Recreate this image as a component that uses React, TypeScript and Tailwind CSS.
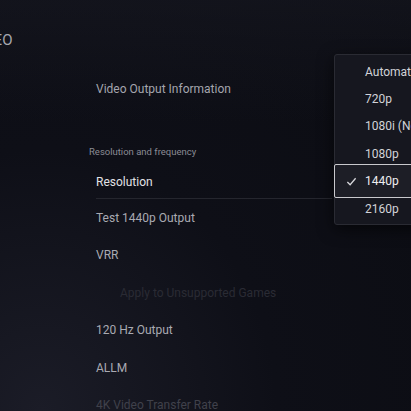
import React from 'react';

interface Row {
  label: string;
  tone: 'normal' | 'bright' | 'dim' | 'faint';
  indent?: boolean;
}

const rows: Row[] = [
  { label: 'Test 1440p Output', tone: 'normal' },
  { label: 'VRR', tone: 'normal' },
  { label: 'Apply to Unsupported Games', tone: 'faint', indent: true },
  { label: '120 Hz Output', tone: 'normal' },
  { label: 'ALLM', tone: 'normal' },
  { label: '4K Video Transfer Rate', tone: 'dim' },
];

const toneClass: Record<Row['tone'], string> = {
  normal: 'text-[#a9aab2]',
  bright: 'text-[#e4e4e8]',
  dim: 'text-[#40414b]',
  faint: 'text-[#2a2b34]',
};

const options = ['Automatic', '720p', '1080i (Not Recommended)', '1080p', '1440p', '2160p'];

const App: React.FC = () => {
  const selected = '1440p';

  return (
    <div
      className="relative w-[411px] h-[411px] overflow-hidden bg-[radial-gradient(ellipse_at_10%_100%,#1b1c27_0%,#0e0f17_45%,#0b0c12_100%)]"
      style={{ fontFamily: 'Roboto, "Noto Sans", sans-serif' }}
    >
      <div className="absolute inset-0 bg-[linear-gradient(180deg,rgba(30,31,42,0.35)_0%,rgba(0,0,0,0)_30%)]" aria-hidden />

      <div className="relative flex flex-col">
        {/* page title, cut at the left edge */}
        <div className="h-[80px] pt-[31px] w-[13px] flex justify-end">
          <span className="whitespace-nowrap text-[15px] leading-[18px] text-[#a6a7af] tracking-wide">VIDEO</span>
        </div>

        <div className="pl-[96px] text-[12px] text-[#a4a5ad] leading-[18px]">Video Output Information</div>

        <div className="pl-[89px] mt-[47px] text-[9.5px] text-[#8b8c95] leading-[14px]">Resolution and frequency</div>

        <div className="ml-[96px] w-[236px] mt-[6px] h-[34px] flex items-center border-b border-[#25262e]">
          <span className="text-[12px] text-[#e2e2e6]">Resolution</span>
        </div>

        <div className="flex flex-col">
          {rows.map((r) => (
            <div
              key={r.label}
              className={`h-[37.5px] flex items-center ${r.indent ? 'pl-[120px]' : 'pl-[96px]'} text-[12px] ${toneClass[r.tone]}`}
            >
              {r.label}
            </div>
          ))}
        </div>
      </div>

      {/* dropdown */}
      <div className="absolute left-[334px] top-[54px] w-[140px] h-[171px] bg-[#16171f] border border-[#2a2b33] rounded-[3px] py-[3px] shadow-[0_4px_16px_rgba(0,0,0,0.6)]">
        {options.map((o) => {
          const on = o === selected;
          return (
            <div
              key={o}
              className={`h-[27.3px] flex items-center pl-[30px] relative whitespace-nowrap text-[12px] ${
                on ? 'text-[#eeeef0] bg-[#1d1e26] border border-[#c9c9cd] rounded-[2px] -mx-px h-[34px] my-[-3px]' : 'text-[#d2d3d8]'
              }`}
            >
              {on && (
                <svg className="absolute left-[11px] w-[11px] h-[11px]" viewBox="0 0 12 12" fill="none" stroke="#d8d8dc" strokeWidth="1.4">
                  <path d="M1.5 6.5 L4.5 9.5 L10.5 2.5" />
                </svg>
              )}
              {o}
            </div>
          );
        })}
      </div>
    </div>
  );
};

export default App;
